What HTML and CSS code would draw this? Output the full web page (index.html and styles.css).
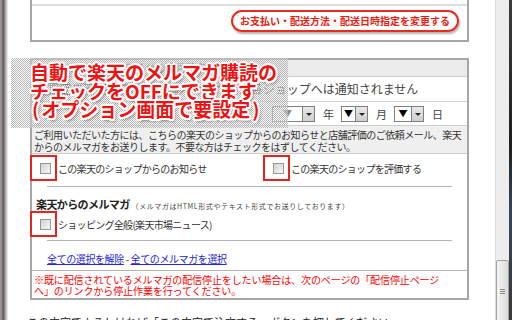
FILE: index.html
```html
<!DOCTYPE html>
<html lang="ja">
<head>
    <meta charset="UTF-8">
    <meta name="viewport" content="width=device-width, initial-scale=1.0">
    <title>ご注文内容の確認 - 楽天市場</title>
    <link rel="stylesheet" href="styles.css">
</head>
<body>
    <div class="frame-left"></div>

    <div class="page">
        <div class="box top-box">
            <div class="top-line"></div>
            <div class="btn-row">
                <a class="change-btn" href="#">お支払い・配送方法・配送日時指定を変更する</a>
            </div>
        </div>

        <div class="box mail-box">
            <div class="box-head">メールマガジン・お知らせの配信設定</div>
            <div class="notice-row">※設定を変更しても、ご購入いただいた各ショップへは通知されません</div>
            <div class="date-row">
                <span class="select w30"><span class="val muted">▼</span><span class="arrow"></span></span>
                <span class="unit">年</span>
                <span class="select w14"><span class="val">▼</span><span class="arrow"></span></span>
                <span class="unit">月</span>
                <span class="select w17"><span class="val">▼</span><span class="arrow"></span></span>
                <span class="unit">日</span>
            </div>
            <div class="info-band">
                ご利用いただいた方には、こちらの楽天のショップからのお知らせと店舗評価のご依頼メール、楽天<br>
                からのメルマガをお送りします。不要な方はチェックをはずしてください。
            </div>

            <div class="check-grid">
                <label class="check"><span class="mark"><span class="cb"></span></span>この楽天のショップからのお知らせ</label>
                <label class="check"><span class="mark"><span class="cb"></span></span>この楽天のショップを評価する</label>
            </div>
            <hr class="divider">

            <div class="mag-title">楽天からのメルマガ <small>（メルマガはHTML形式やテキスト形式でお送りしております）</small></div>
            <label class="check single"><span class="mark"><span class="cb"></span></span>ショッピング全般(楽天市場ニュース)</label>
            <hr class="divider second">

            <div class="links">
                <a href="#">全ての選択を解除</a> - <a href="#">全てのメルマガを選択</a>
            </div>
            <p class="warn">
                ※既に配信されているメルマガの配信停止をしたい場合は、次のページの「配信停止ページ<br>
                へ」のリンクから停止作業を行ってください。
            </p>
        </div>

        <p class="next-note">この内容でよろしければ「この内容で注文する」ボタンを押してください。</p>

        <!-- annotation pasted over the form -->
        <div class="promo">
            自動で楽天のメルマガ購読の<br>
            チェックをOFFにできます<br>
            <span class="paren">(</span>オプション画面で要設定<span class="paren">)</span>
        </div>
    </div>

    <div class="scrollbar">
        <div class="thumb"><span class="grip"></span></div>
    </div>
    <div class="frame-right"></div>
</body>
</html>
```

FILE: styles.css
```css
html, body {
    margin: 0;
    padding: 0;
}
body {
    width: 512px;
    height: 320px;
    overflow: hidden;
    display: flex;
    font-family: "Noto Sans CJK JP", "Liberation Sans", sans-serif;
    color: #333;
    background: #fff;
}
.frame-left {
    width: 8px;
    flex-shrink: 0;
    background: linear-gradient(to right, #a4a4a4 0%, #6e5a5a 45%, #bdbdbd 75%, #f2f2f2 100%);
}
.frame-right {
    width: 3px;
    flex-shrink: 0;
    background: linear-gradient(to bottom, #3c3c3c 0%, #1e1e1e 45%, #33465a 65%, #3a3a3a 100%);
}
.page {
    position: relative;
    flex: 1;
    display: flex;
    flex-direction: column;
    padding-left: 22px;
}
.box {
    width: 439px;
    box-sizing: border-box;
    border: 2px solid #a6a6a6;
    background: #fff;
}
.top-box {
    border-top: none;
}
.top-line {
    height: 4px;
    border-bottom: 2px solid #dedede;
}
.btn-row {
    display: flex;
    justify-content: flex-end;
    padding: 4px 8px 8px 0;
}
.change-btn {
    height: 22px;
    box-sizing: border-box;
    padding: 0 7px;
    border: 2px solid #ea2a1a;
    border-radius: 12px;
    color: #e8200f;
    font-size: 10px;
    font-weight: bold;
    line-height: 18px;
    text-decoration: none;
    box-shadow: 1px 2px 2px rgba(0,0,0,0.3);
}
.mail-box {
    margin-top: 16px;
}
.box-head {
    height: 16px;
    background: #ebebeb;
    border-bottom: 1px solid #cfcfcf;
    font-size: 10px;
    line-height: 16px;
    padding-left: 4px;
    color: #555;
}
.notice-row {
    height: 24px;
    line-height: 24px;
    border-bottom: 1px solid #cfcfcf;
    font-size: 12px;
    padding-left: 4px;
    color: #444;
    white-space: nowrap;
}
.date-row {
    height: 23px;
    display: flex;
    align-items: center;
    padding-left: 240px;
    font-size: 11px;
}
.select {
    display: flex;
    height: 16px;
}
.select .val {
    box-sizing: border-box;
    border: 1px solid #7f7f7f;
    border-right: none;
    background: #fff;
    font-size: 9px;
    line-height: 14px;
    text-align: center;
    color: #000;
}
.select .val.muted {
    color: #8a8a8a;
}
.w30 .val { width: 30px; }
.w14 .val { width: 14px; }
.w17 .val { width: 17px; }
.select .arrow {
    position: relative;
    width: 13px;
    box-sizing: border-box;
    border: 1px solid #7f7f7f;
    background: linear-gradient(#e8e8e8, #cfcfcf);
}
.select .arrow::after {
    content: "";
    position: absolute;
    left: 3px;
    top: 6px;
    border-left: 3px solid transparent;
    border-right: 3px solid transparent;
    border-top: 3px solid #222;
}
.unit {
    margin: 0 7px 0 8px;
    color: #444;
}
.info-band {
    height: 29px;
    background: #efefef;
    border-top: 1px solid #cfcfcf;
    border-bottom: 1px solid #cfcfcf;
    padding: 3px 0 0 2px;
    box-sizing: border-box;
    font-size: 10px;
    line-height: 12px;
    letter-spacing: -0.5px;
    white-space: nowrap;
}
.check-grid {
    display: grid;
    grid-template-columns: 233px auto;
    margin-top: 1px;
}
.check {
    display: flex;
    align-items: center;
    font-size: 10px;
    letter-spacing: -0.7px;
    color: #333;
    white-space: nowrap;
}
.check.single {
    margin-top: -2px;
}
.mark {
    width: 27px;
    height: 26px;
    box-sizing: border-box;
    border: 2px solid #e8221c;
    margin-left: -2px;
    margin-right: 1px;
    display: flex;
    align-items: center;
    padding-left: 8px;
}
.cb {
    width: 11px;
    height: 11px;
    box-sizing: border-box;
    border: 1px solid #979797;
    background: linear-gradient(135deg, #d2d2d2, #f7f7f7);
}
.divider {
    border: none;
    border-top: 1px solid #b4b4b4;
    margin: 5px 15px 0 15px;
}
.divider.second {
    margin-top: 3px;
}
.mag-title {
    margin-top: 10px;
    padding-left: 4px;
    font-size: 11px;
    font-weight: bold;
    line-height: 14px;
    letter-spacing: -0.6px;
    color: #222;
    white-space: nowrap;
}
.mag-title small {
    font-size: 7px;
    font-weight: normal;
    letter-spacing: 0.6px;
    color: #444;
}
.links {
    margin-top: 11px;
    padding-left: 15px;
    font-size: 10px;
    line-height: 14px;
    letter-spacing: -0.4px;
    color: #333;
}
.links a {
    color: #2424d8;
}
.warn {
    margin: 4px 0 0 0;
    border-top: 1px solid #b4b4b4;
    padding: 3px 0 2px 2px;
    font-size: 10px;
    line-height: 11px;
    letter-spacing: -0.1px;
    color: #f00;
    white-space: nowrap;
}
.next-note {
    margin: 15px 0 0 -3px;
    font-size: 11px;
    line-height: 14px;
    color: #222;
    white-space: nowrap;
}
.promo {
    position: absolute;
    left: 3px;
    top: 58px;
    width: 277px;
    height: 70px;
    box-sizing: border-box;
    padding: 5px 0 0 19px;
    background: repeating-conic-gradient(#b4b4b4 0 25%, rgba(255,255,255,0.35) 0 50%) 0 0 / 2px 2px;
    color: #ee1212;
    font-size: 19px;
    font-weight: bold;
    line-height: 18.5px;
    white-space: nowrap;
    text-shadow:
        2px 0 #fff, -2px 0 #fff, 0 2px #fff, 0 -2px #fff,
        1.5px 1.5px #fff, -1.5px -1.5px #fff, 1.5px -1.5px #fff, -1.5px 1.5px #fff,
        2px 3px 3px rgba(0,0,0,0.45);
}
.promo .paren {
    margin: 0 2px;
}
.scrollbar {
    width: 14px;
    flex-shrink: 0;
    box-sizing: border-box;
    border-left: 1px solid #dadada;
    background: #ededed;
}
.thumb {
    margin-top: 260px;
    height: 80px;
    box-sizing: border-box;
    border: 1px solid #a2a2a2;
    border-radius: 2px;
    background: linear-gradient(to right, #f4f4f4, #dcdcdc);
    display: flex;
    justify-content: center;
    padding-top: 28px;
}
.grip {
    width: 5px;
    height: 5px;
    background: repeating-linear-gradient(#888 0 1px, transparent 1px 2px);
}
```
